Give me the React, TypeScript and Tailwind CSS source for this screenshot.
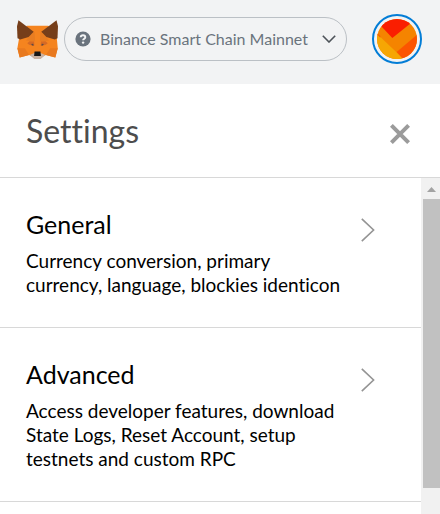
import React from "react";

type Section = { title: string; description: string };

const sections: Section[] = [
  {
    title: "General",
    description:
      "Currency conversion, primary currency, language, blockies identicon",
  },
  {
    title: "Advanced",
    description:
      "Access developer features, download State Logs, Reset Account, setup testnets and custom RPC",
  },
];

const foxShapes: [string, string][] = [
  ["#F5841F", "M9 5.6H26.6L33.5 14L34.4 23.6L32.4 30.9L24.7 29L20.3 31H15.3L10.9 29L3.2 30.9L1.3 23.6L3 14Z"],
  ["#E8791F", "M24.7 28.9L28.2 23.6H34.4L32.4 30.9Z"],
  ["#E8791F", "M10.9 28.9L7.4 23.6H1.3L3.2 30.9Z"],
  ["#E87D22", "M10.5 14.5L15.4 10.4L15.8 18L8.4 17.6Z"],
  ["#E87D22", "M25.1 14.5L20.3 10.4L19.8 18L27.2 17.6Z"],
  ["#D56A25", "M9.4 19.6L11.2 18L15 18.2L15.2 21.6L13 21.4L11 20.7Z"],
  ["#D56A25", "M26.2 19.6L24.4 18L20.6 18.2L20.4 21.6L22.6 21.4L24.6 20.7Z"],
  ["#5b4a48", "M12.6 20.2L14.2 19.9L14.8 21.4L13.4 21.4Z"],
  ["#5b4a48", "M23 20.2L21.4 19.9L20.8 21.4L22.2 21.4Z"],
  ["#C9B2A3", "M11.4 29L15.2 27.4H20.4L24.2 29L20.4 32.1H15.2Z"],
  ["#161616", "M15.4 26.2H20.2L20.6 29.7H15Z"],
  ["#763E1A", "M33.4 1.2L34.6 6L34.2 15.6L32 16.5L25.1 14.5L20.9 10.4Z"],
  ["#763E1A", "M2.2 1.2L1 6L1.4 15.6L3.6 16.5L10.5 14.5L14.7 10.4Z"],
];

function FoxLogo() {
  return (
    <svg
      viewBox="1 1 33.6 31.1"
      preserveAspectRatio="none"
      className="h-[39px] w-[41px] shrink-0"
      aria-hidden="true"
    >
      {foxShapes.map(([fill, d]) => (
        <path key={d} d={d} fill={fill} />
      ))}
    </svg>
  );
}

function Identicon() {
  return (
    <svg viewBox="0 0 120 120" className="size-10" aria-hidden="true">
      <defs>
        <clipPath id="identicon">
          <circle cx="60" cy="60" r="60" />
        </clipPath>
      </defs>
      <g clipPath="url(#identicon)">
        <rect width="120" height="120" fill="#F58400" />
        <path d="M-8 0L46 57L106 9L106 0Z" fill="#FA1E00" />
        <path d="M0 44L60 101L82 124L0 124Z" fill="#F6A604" />
        <path d="M0 42L10 51L10 56L0 46Z" fill="#FC5500" />
        <path d="M59 99L124 44L124 90L82 124Z" fill="#FC5500" />
      </g>
    </svg>
  );
}

function Header() {
  return (
    <header className="flex h-[84px] items-center bg-[#f2f3f4] pr-[18px] pb-[6px] pl-[17px]">
      <FoxLogo />
      <button
        type="button"
        className="ml-[6px] flex h-11 items-center rounded-full border border-[#bbc0c5] px-[10px]"
      >
        <svg viewBox="0 0 16 16" className="size-4 shrink-0" aria-hidden="true">
          <circle cx="8" cy="8" r="7.6" fill="#6a737d" />
          <path
            d="M5.7 6.2C5.8 4.9 6.8 4.2 8 4.2C9.3 4.2 10.3 5 10.3 6.2C10.3 7.7 8.2 7.7 8.1 9.3"
            fill="none"
            stroke="#f2f3f4"
            strokeWidth="1.9"
          />
          <circle cx="8.1" cy="11.6" r="1.2" fill="#f2f3f4" />
        </svg>
        <span className="mr-[10px] ml-[9px] w-[212px] text-left text-base whitespace-nowrap text-[#6a737d]">
          Binance Smart Chain Mainnet
        </span>
        <svg
          viewBox="0 0 14 8"
          className="h-2 w-[14px] shrink-0"
          fill="none"
          stroke="#4d5359"
          strokeWidth="1.6"
          aria-hidden="true"
        >
          <path d="M0.8 0.8L7 7L13.2 0.8" />
        </svg>
      </button>
      <button
        type="button"
        aria-label="Account"
        className="ml-auto flex size-[50px] shrink-0 items-center justify-center rounded-full border-2 border-[#037dd6]"
      >
        <Identicon />
      </button>
    </header>
  );
}

function SettingsRow({ title, description }: Section) {
  return (
    <button
      type="button"
      className="flex w-full items-start border-b border-[#d8d8d8] pt-8 pr-[46px] pb-[30px] pl-[26px] text-left text-black"
    >
      <span className="min-w-0 flex-1">
        <span className="block text-[25px] leading-7">{title}</span>
        <span className="mt-[11px] block text-[19px] leading-6">
          {description}
        </span>
      </span>
      <svg
        viewBox="0 0 14 24"
        className="mt-2 ml-4 h-6 w-[14px] shrink-0"
        fill="none"
        stroke="#949494"
        strokeWidth="1.6"
        aria-hidden="true"
      >
        <path d="M0.8 0.8L12.6 12L0.8 23.2" />
      </svg>
    </button>
  );
}

function ScrollTrack() {
  return (
    <div
      className="flex w-[19px] shrink-0 flex-col bg-[#f1f1f1] pl-[2px]"
      aria-hidden="true"
    >
      <svg viewBox="0 0 17 21" className="h-[21px] w-[17px]">
        <path d="M4 14L8.5 9L13 14Z" fill="#a3a3a3" />
      </svg>
      <div className="h-[289px] bg-[#c1c1c1]" />
    </div>
  );
}

export default function App() {
  return (
    <div className="flex min-h-screen flex-col bg-white font-[Lato,sans-serif] [font-variant-ligatures:none]">
      <Header />
      <div className="flex h-[94px] items-center justify-between border-b border-[#d8d8d8] pr-[30px] pl-[26px]">
        <h1 className="text-[32px] leading-10 text-[#4d4d4d]">Settings</h1>
        <button type="button" aria-label="Close">
          <svg
            viewBox="0 0 20 20"
            className="mt-[6px] size-5"
            fill="none"
            stroke="#9b9b9b"
            strokeWidth="4"
            aria-hidden="true"
          >
            <path d="M1.4 1.4L18.6 18.6M18.6 1.4L1.4 18.6" />
          </svg>
        </button>
      </div>
      <div className="flex flex-1">
        <main className="min-w-0 flex-1">
          {sections.map((section) => (
            <SettingsRow key={section.title} {...section} />
          ))}
        </main>
        <ScrollTrack />
      </div>
    </div>
  );
}
